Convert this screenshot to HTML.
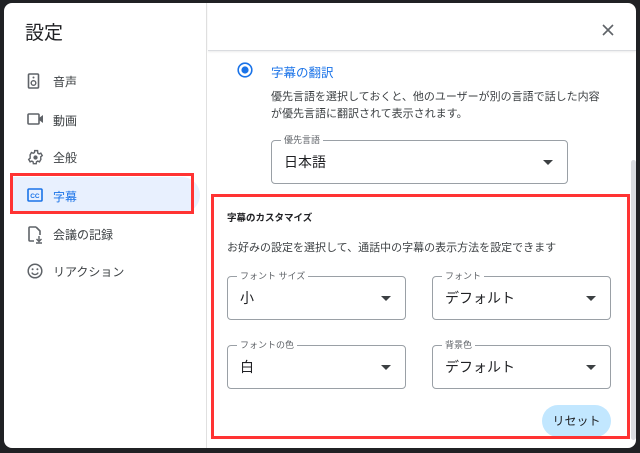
<!DOCTYPE html>
<html><head><meta charset="utf-8"><style>
*{box-sizing:border-box;margin:0;padding:0}
body{width:640px;height:453px;background:#202124;position:relative;overflow:hidden;font-family:"Liberation Sans","Noto Sans CJK JP",sans-serif;color:#3c4043}
.dlg{position:absolute;left:4px;top:3px;width:632px;height:445px;background:#fff;border-radius:8px;overflow:hidden}
.left{position:absolute;left:0;top:0;width:203px;height:100%;border-right:1px solid #e0e0e0}
.a{position:absolute}
.t{font-size:19px;color:#202124;left:21px;top:15px}
.nav{position:absolute;left:23px;font-size:12px;color:#3c4043}
.nav svg{position:absolute;left:0;top:0}
.nav span{position:absolute;left:26px;top:0px;white-space:nowrap}
.hdr{position:absolute;left:204px;top:0;right:0;height:48px;border-bottom:1px solid #dadce0;box-shadow:0 1px 2px rgba(0,0,0,.08)}
.sel{position:absolute;border:1px solid #9aa0a6;border-radius:4px}
.sel .l{position:absolute;top:-7px;left:9px;background:#fff;padding:0 3px;font-size:9px;color:#5f6368;line-height:12px}
.sel .v{position:absolute;left:12px;top:11px;font-size:14px;color:#202124}
.sel .ar{position:absolute;right:14px;top:19px;border-left:5px solid transparent;border-right:5px solid transparent;border-top:5px solid #3c4043}
.red{position:absolute;border:3px solid #f33}
</style></head><body>
<div class="dlg">
<div class="left">
<div class="a t">設定</div>
<div class="nav" style="top:70px"><svg width="14" height="16" viewBox="0 0 14 16"><rect x="1.5" y="1" width="10" height="14" rx="1" fill="none" stroke="#5f6368" stroke-width="1.6"/><circle cx="6.5" cy="10" r="2.3" fill="none" stroke="#5f6368" stroke-width="1.4"/><circle cx="6.5" cy="4.5" r="1" fill="#5f6368"/></svg><span>音声</span></div>
<div class="nav" style="top:109px"><svg width="18" height="14" viewBox="0 0 18 14"><rect x="1" y="2" width="11" height="10" rx="1" fill="none" stroke="#5f6368" stroke-width="1.6"/><path d="M12 6l4-3v8l-4-3z" fill="#5f6368"/></svg><span>動画</span></div>
<div class="nav" style="top:146px"><svg width="17" height="17" viewBox="0 0 24 24"><path fill="none" stroke="#5f6368" stroke-width="2" d="M19.4 13c.04-.33.06-.66.06-1s-.02-.67-.06-1l2.1-1.65-2-3.46-2.5 1a7.3 7.3 0 0 0-1.7-1L14.9 2.3h-4L10.5 5a7.3 7.3 0 0 0-1.7 1l-2.5-1-2 3.46L4.5 11c-.04.33-.06.66-.06 1s.02.67.06 1l-2.1 1.65 2 3.46 2.5-1c.52.4 1.1.74 1.7 1l.4 2.65h4l.4-2.65c.6-.26 1.18-.6 1.7-1l2.5 1 2-3.46z"/><circle cx="12" cy="12" r="3" fill="#5f6368"/></svg><span>全般</span></div>
<div class="a" style="left:6px;top:174px;width:190px;height:36px;background:#e8f0fe;border-radius:0 18px 18px 0"></div>
<div class="nav" style="top:185px;color:#1a73e8"><svg width="16" height="14" viewBox="0 0 16 14"><rect x="1" y="1" width="14" height="12" rx="1" fill="none" stroke="#1a73e8" stroke-width="1.6"/><text x="3.2" y="10" font-size="6.5" font-weight="bold" fill="#1a73e8" font-family="Liberation Sans">CC</text></svg><span>字幕</span></div>
<div class="red" style="left:6px;top:170px;width:184px;height:41px"></div>
<div class="nav" style="top:223px"><svg width="16" height="18" viewBox="0 0 16 18"><path d="M9 1H3a1 1 0 0 0-1 1v12a1 1 0 0 0 1 1h4M9 1l4 4v4" fill="none" stroke="#5f6368" stroke-width="1.6"/><path d="M12 10v5M9.5 13l2.5 2.5 2.5-2.5M9 17h6" fill="none" stroke="#5f6368" stroke-width="1.4"/></svg><span>会議の記録</span></div>
<div class="nav" style="top:260px"><svg width="16" height="16" viewBox="0 0 16 16"><circle cx="8" cy="8" r="6.8" fill="none" stroke="#5f6368" stroke-width="1.5"/><circle cx="5.6" cy="6.3" r="1" fill="#5f6368"/><circle cx="10.4" cy="6.3" r="1" fill="#5f6368"/><path d="M4.8 9.6a3.6 3.6 0 0 0 6.4 0" fill="none" stroke="#5f6368" stroke-width="1.4"/></svg><span>リアクション</span></div>
</div>
<div class="hdr"></div>
<svg class="a" style="left:597px;top:20px" width="14" height="14" viewBox="0 0 14 14"><path d="M2 2l10 10M12 2L2 12" stroke="#5f6368" stroke-width="1.6"/></svg>
<div class="a" style="left:627px;top:157px;width:5px;height:280px;background:#dadce0;border-radius:3px"></div>
<svg class="a" style="left:233px;top:59px" width="16" height="16" viewBox="0 0 16 16"><circle cx="8" cy="8" r="6.8" fill="none" stroke="#1a73e8" stroke-width="1.6"/><circle cx="8" cy="8" r="3.6" fill="#1a73e8"/></svg>
<div class="a" style="left:267px;top:59px;font-size:12.5px;color:#1a73e8">字幕の翻訳</div>
<div class="a" style="left:267px;top:86px;font-size:11px;line-height:17px;width:370px">優先言語を選択しておくと、他のユーザーが別の言語で話した内容<br>が優先言語に翻訳されて表示されます。</div>
<div class="sel" style="left:267px;top:137px;width:297px;height:44px"><div class="l">優先言語</div><div class="v">日本語</div><div class="ar"></div></div>
<div class="a" style="left:223px;top:207px;font-size:9.5px;color:#202124;font-weight:bold">字幕のカスタマイズ</div>
<div class="a" style="left:223px;top:236px;font-size:11px">お好みの設定を選択して、通話中の字幕の表示方法を設定できます</div>
<div class="sel" style="left:223px;top:273px;width:179px;height:44px"><div class="l">フォント サイズ</div><div class="v">小</div><div class="ar"></div></div>
<div class="sel" style="left:428px;top:273px;width:179px;height:44px"><div class="l">フォント</div><div class="v">デフォルト</div><div class="ar"></div></div>
<div class="sel" style="left:223px;top:342px;width:179px;height:44px"><div class="l">フォントの色</div><div class="v">白</div><div class="ar"></div></div>
<div class="sel" style="left:428px;top:342px;width:179px;height:44px"><div class="l">背景色</div><div class="v">デフォルト</div><div class="ar"></div></div>
<div class="a" style="left:538px;top:402px;width:69px;height:32px;background:#c2e7ff;border-radius:16px;font-size:12px;color:#202124;text-align:center;line-height:32px">リセット</div>
<div class="red" style="left:207px;top:191px;width:419px;height:245px"></div>
</div>
</body></html>
